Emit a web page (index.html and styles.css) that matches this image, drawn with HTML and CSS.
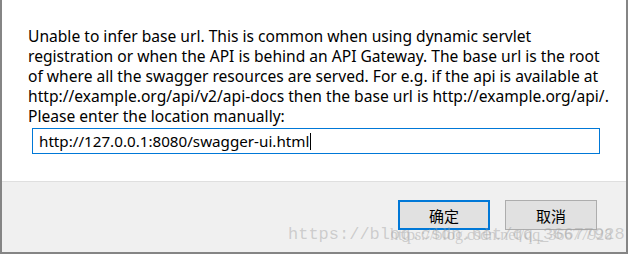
FILE: index.html
```html
<!DOCTYPE html>
<html>
<head>
<meta charset="utf-8">
<link rel="stylesheet" href="styles.css">
</head>
<body>
<div class="dialog">
  <div class="content">
    <p class="msg">Unable to infer base url. This is common when using dynamic servlet<br>registration or when the API is behind an API Gateway. The base url is the root<br>of where all the swagger resources are served. For e.g. if the api is available at<br>http://example.org/api/v2/api-docs then the base url is http://example.org/api/.<br>Please enter the location manually:</p>
    <div class="input"><span class="val">http://127.0.0.1:8080/swagger-ui.html</span><span class="caret"></span></div>
  </div>
  <div class="footer">
    <button class="btn primary">确定</button>
    <button class="btn">取消</button>
  </div>
  <div class="wm wm1">https://blog.csdn.net/qq_36677928</div>
  <div class="wm wm2">https://blog.csdn.net/qq_36677928</div>
</div>
</body>
</html>
```
FILE: styles.css
```css
html, body {
  margin: 0;
  padding: 0;
  background: #ffffff;
}
.dialog {
  position: relative;
  width: 624px;
  height: 252px;
  border-left: 2px solid #858585;
  border-right: 2px solid #858585;
  border-bottom: 2px solid #858585;
  background: #ffffff;
  font-family: "Noto Sans", "Segoe UI", sans-serif;
  color: #000;
  overflow: hidden;
}
.content {
  height: 155px;
  padding: 26px 0 0 26px;
  border-bottom: 1px solid #dfdfdf;
}
.msg {
  margin: 0;
  font-size: 15.6px;
  line-height: 20px;
  white-space: nowrap;
}
.input {
  margin: 2px 0 0 4px;
  height: 24px;
  border: 1px solid #0078d7;
  display: flex;
  align-items: center;
  padding-left: 6px;
  box-sizing: content-box;
  width: 560px;
  font-size: 15.2px;
}
.caret {
  display: inline-block;
  width: 1px;
  height: 17px;
  background: #000;
  margin-left: 1px;
}
.footer {
  height: 70px;
  background: #f0f0f0;
  display: flex;
  justify-content: flex-end;
  align-items: flex-start;
  gap: 15px;
  padding: 18px 29px 0 0;
  box-sizing: border-box;
}
.btn {
  width: 92px;
  height: 30px;
  background: #e1e1e1;
  border: 1px solid #adadad;
  font-family: "Noto Sans CJK SC", sans-serif;
  font-size: 15px;
  color: #000;
  padding: 0;
  margin: 0;
}
.btn.primary {
  border: 2px solid #0078d7;
}
.wm {
  position: absolute;
  color: rgba(160, 160, 160, 0.45);
  white-space: nowrap;
  pointer-events: none;
}
.wm1 {
  left: 286px;
  top: 225px;
  font-family: "Liberation Mono", monospace;
  font-size: 17px;
}
.wm2 {
  left: 388px;
  top: 226px;
  font-family: "Liberation Serif", serif;
  font-size: 16px;
}
```
